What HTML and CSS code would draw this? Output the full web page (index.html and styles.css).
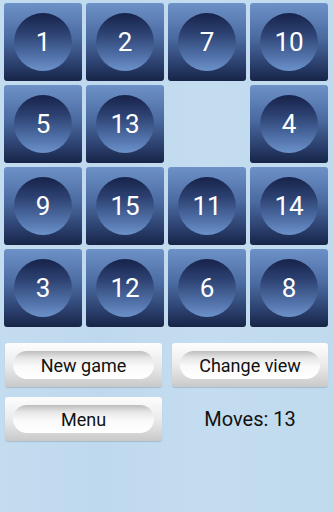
FILE: index.html
```html
<!DOCTYPE html>
<html lang="en">
<head>
    <meta charset="UTF-8">
    <meta name="viewport" content="width=device-width, initial-scale=1.0">
    <title>15 Puzzle</title>
    <link rel="stylesheet" href="styles.css">
</head>
<body>

    <div class="board">
        <div class="tile"><span class="ball">1</span></div>
        <div class="tile"><span class="ball">2</span></div>
        <div class="tile"><span class="ball">7</span></div>
        <div class="tile"><span class="ball">10</span></div>

        <div class="tile"><span class="ball">5</span></div>
        <div class="tile"><span class="ball">13</span></div>
        <div class="tile empty"></div>
        <div class="tile"><span class="ball">4</span></div>

        <div class="tile"><span class="ball">9</span></div>
        <div class="tile"><span class="ball">15</span></div>
        <div class="tile"><span class="ball">11</span></div>
        <div class="tile"><span class="ball">14</span></div>

        <div class="tile"><span class="ball">3</span></div>
        <div class="tile"><span class="ball">12</span></div>
        <div class="tile"><span class="ball">6</span></div>
        <div class="tile"><span class="ball">8</span></div>
    </div>

    <div class="controls">
        <button class="btn"><span>New game</span></button>
        <button class="btn"><span>Change view</span></button>
        <button class="btn"><span>Menu</span></button>
        <div class="moves">Moves: 13</div>
    </div>

</body>
</html>
```

FILE: styles.css
```css
html, body {
    height: 100%;
}
body {
    margin: 0;
    padding: 3px 5px 0 4px;
    font-family: Roboto, "Noto Sans", sans-serif;
    background-color: #c0daee;
    background-image: linear-gradient(90deg, rgba(255,255,255,0.05), rgba(180,200,235,0.1) 30%, rgba(255,255,255,0.06) 60%, rgba(190,215,235,0.08));
    box-sizing: border-box;
}
.board {
    display: grid;
    grid-template-columns: repeat(4, 78px);
    grid-auto-rows: 78px;
    gap: 4px;
}
.tile {
    display: flex;
    align-items: center;
    justify-content: center;
    border-radius: 3px;
    background: linear-gradient(#6d92c8, #4a6aa0 45%, #2a3e6b 80%, #172447);
}
.tile.empty {
    background: none;
}
.ball {
    width: 58px;
    height: 58px;
    border-radius: 50%;
    display: flex;
    align-items: center;
    justify-content: center;
    color: #fff;
    font-size: 26px;
    background: linear-gradient(#16224a, #2d4272 35%, #4c6ca3 70%, #6c92ca);
}
.controls {
    display: grid;
    grid-template-columns: 157px 156px;
    grid-auto-rows: 44px;
    column-gap: 10px;
    row-gap: 10px;
    margin-top: 16px;
    margin-left: 1px;
}
.btn {
    border: none;
    border-radius: 3px;
    padding: 8px 8px;
    background: linear-gradient(#fdfdfd, #ebebeb 50%, #c9c9c9);
    box-shadow: 0 1px 1px rgba(0, 0, 0, 0.15);
    font-family: Roboto, "Noto Sans", sans-serif;
    cursor: pointer;
}
.btn span {
    display: flex;
    height: 100%;
    align-items: center;
    justify-content: center;
    border-radius: 14px;
    font-size: 18px;
    color: #111;
    background: linear-gradient(#bdbdbd, #e6e6e6 25%, #fafafa 55%, #ffffff);
}
.moves {
    display: flex;
    align-items: center;
    justify-content: center;
    font-size: 20px;
    color: #111;
}
```
